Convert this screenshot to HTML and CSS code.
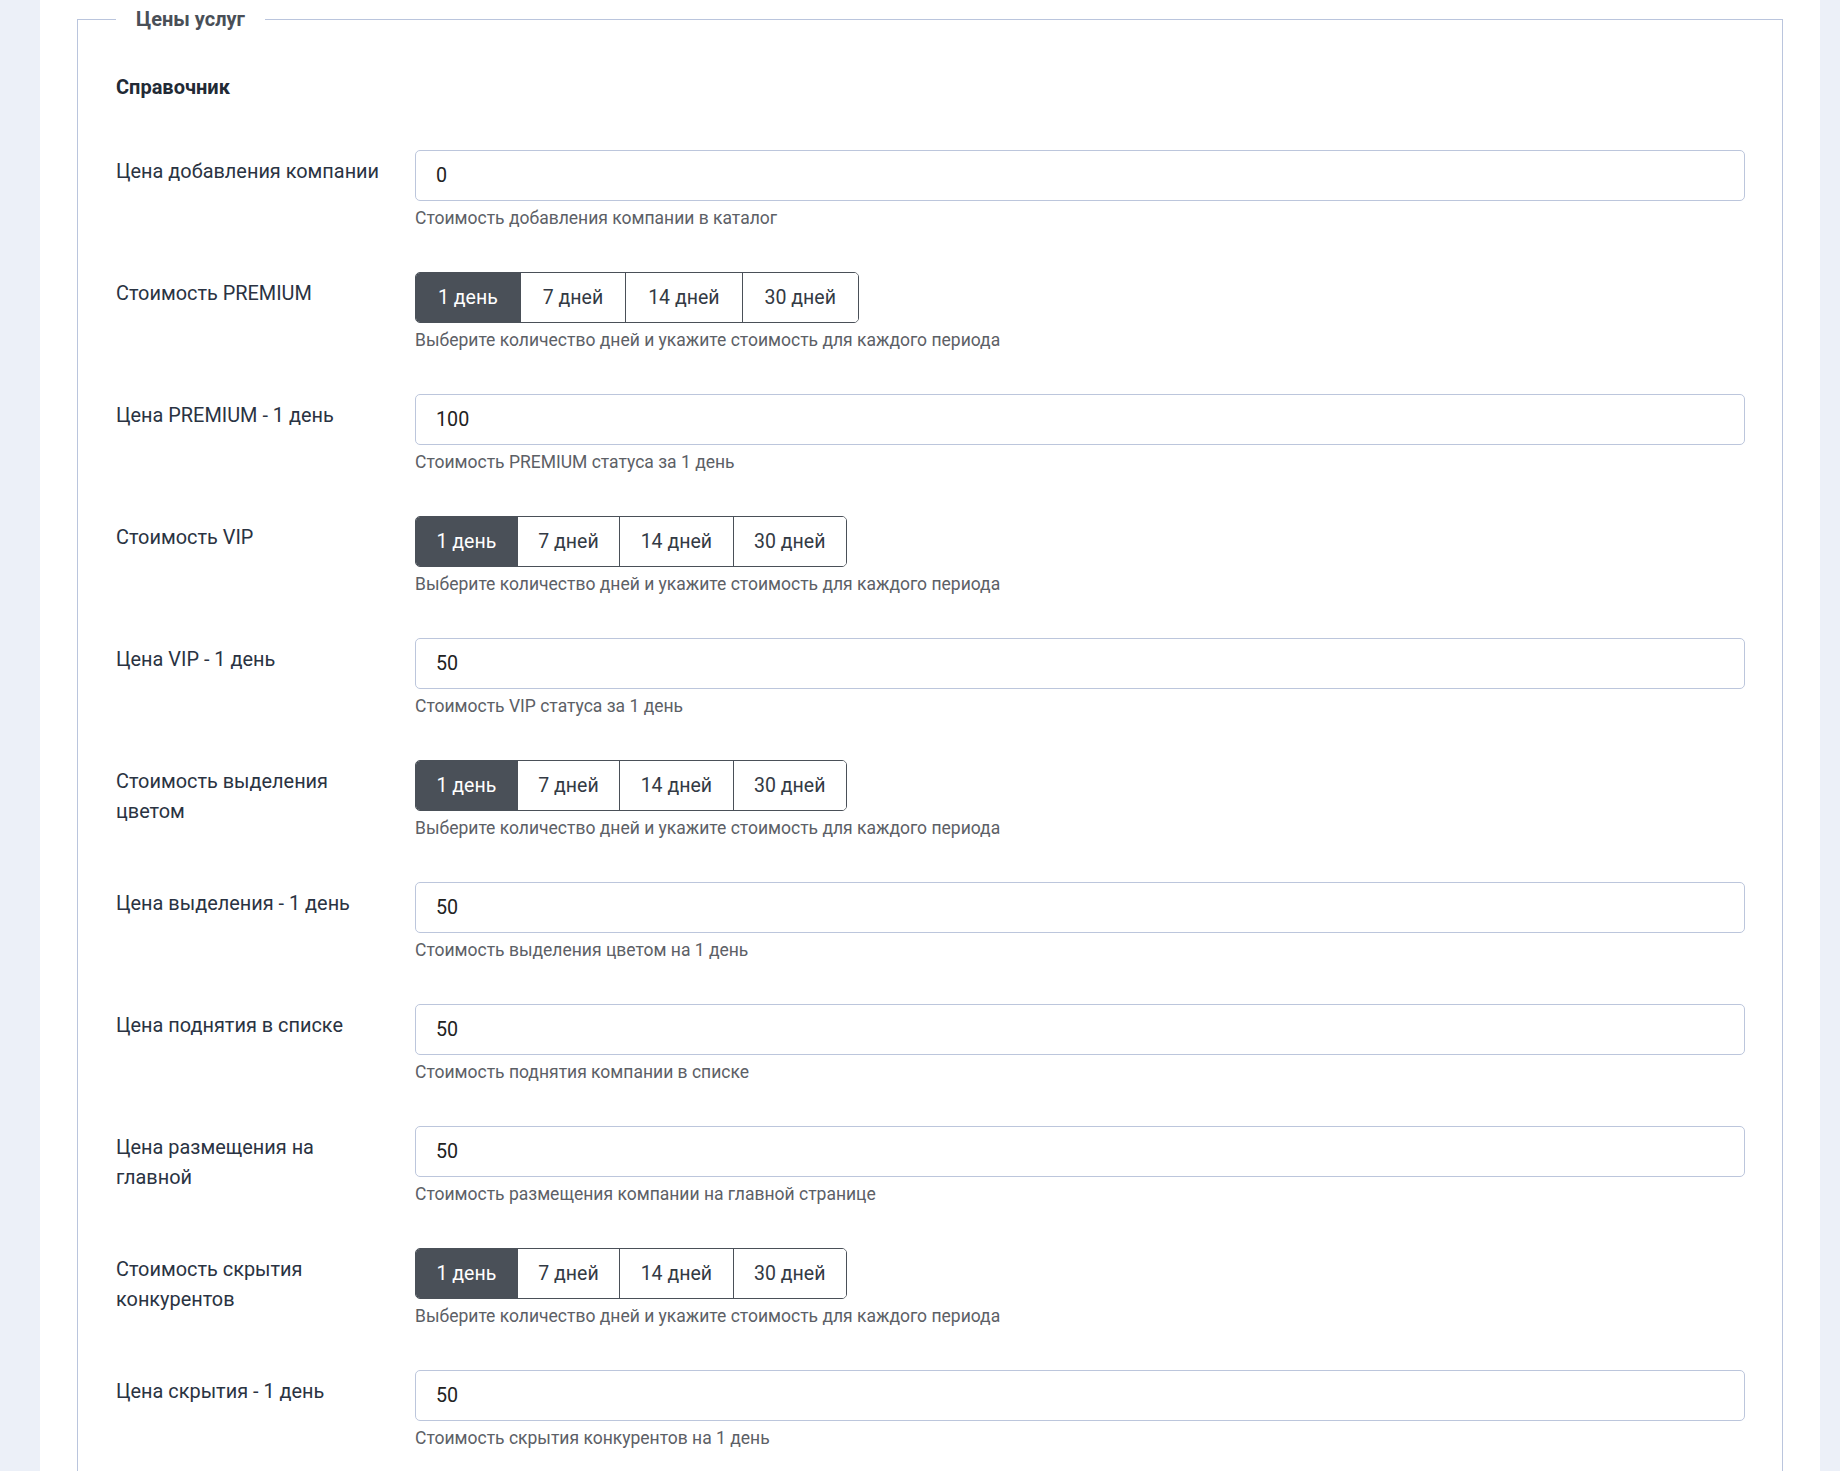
FILE: index.html
```html
<!DOCTYPE html>
<html lang="ru">
<head>
<meta charset="utf-8">
<title>Цены услуг</title>
<link rel="stylesheet" href="styles.css">
</head>
<body>
<div class="page">
  <fieldset class="box">
    <legend class="box-legend">Цены услуг</legend>
    <div class="section-title">Справочник</div>

    <div class="row">
      <label class="row-label">Цена добавления компании</label>
      <div class="row-control">
        <input class="field" type="text" value="0">
        <div class="hint">Стоимость добавления компании в каталог</div>
      </div>
    </div>

    <div class="row">
      <label class="row-label">Стоимость PREMIUM</label>
      <div class="row-control">
        <div class="seg seg-wide">
          <button class="seg-btn active">1 день</button><button class="seg-btn">7 дней</button><button class="seg-btn">14 дней</button><button class="seg-btn">30 дней</button>
        </div>
        <div class="hint">Выберите количество дней и укажите стоимость для каждого периода</div>
      </div>
    </div>

    <div class="row">
      <label class="row-label">Цена PREMIUM - 1 день</label>
      <div class="row-control">
        <input class="field" type="text" value="100">
        <div class="hint">Стоимость PREMIUM статуса за 1 день</div>
      </div>
    </div>

    <div class="row">
      <label class="row-label">Стоимость VIP</label>
      <div class="row-control">
        <div class="seg">
          <button class="seg-btn active">1 день</button><button class="seg-btn">7 дней</button><button class="seg-btn">14 дней</button><button class="seg-btn">30 дней</button>
        </div>
        <div class="hint">Выберите количество дней и укажите стоимость для каждого периода</div>
      </div>
    </div>

    <div class="row">
      <label class="row-label">Цена VIP - 1 день</label>
      <div class="row-control">
        <input class="field" type="text" value="50">
        <div class="hint">Стоимость VIP статуса за 1 день</div>
      </div>
    </div>

    <div class="row">
      <label class="row-label">Стоимость выделения цветом</label>
      <div class="row-control">
        <div class="seg">
          <button class="seg-btn active">1 день</button><button class="seg-btn">7 дней</button><button class="seg-btn">14 дней</button><button class="seg-btn">30 дней</button>
        </div>
        <div class="hint">Выберите количество дней и укажите стоимость для каждого периода</div>
      </div>
    </div>

    <div class="row">
      <label class="row-label">Цена выделения - 1 день</label>
      <div class="row-control">
        <input class="field" type="text" value="50">
        <div class="hint">Стоимость выделения цветом на 1 день</div>
      </div>
    </div>

    <div class="row">
      <label class="row-label">Цена поднятия в списке</label>
      <div class="row-control">
        <input class="field" type="text" value="50">
        <div class="hint">Стоимость поднятия компании в списке</div>
      </div>
    </div>

    <div class="row">
      <label class="row-label">Цена размещения на главной</label>
      <div class="row-control">
        <input class="field" type="text" value="50">
        <div class="hint">Стоимость размещения компании на главной странице</div>
      </div>
    </div>

    <div class="row">
      <label class="row-label">Стоимость скрытия конкурентов</label>
      <div class="row-control">
        <div class="seg">
          <button class="seg-btn active">1 день</button><button class="seg-btn">7 дней</button><button class="seg-btn">14 дней</button><button class="seg-btn">30 дней</button>
        </div>
        <div class="hint">Выберите количество дней и укажите стоимость для каждого периода</div>
      </div>
    </div>

    <div class="row">
      <label class="row-label">Цена скрытия - 1 день</label>
      <div class="row-control">
        <input class="field" type="text" value="50">
        <div class="hint">Стоимость скрытия конкурентов на 1 день</div>
      </div>
    </div>
  </fieldset>
</div>
</body>
</html>
```

FILE: styles.css
```css
* { box-sizing: border-box; }

html, body {
  margin: 0;
  padding: 0;
}

body {
  background: #ecf0f8;
  font-family: Roboto, "Noto Sans", "Liberation Sans", sans-serif;
  color: #2a3342;
}

.page {
  margin: 0 20px 0 40px;
  background: #fff;
  padding: 7px 37px 0;
  min-height: 1471px;
}

.box {
  margin: 0;
  border: 1px solid #bac5dd;
  padding: 0 37px 40px 38px;
  min-width: 0;
}

.box-legend {
  padding: 0 20px;
  font-size: 20px;
  line-height: 24px;
  font-weight: 700;
  color: #4a4f57;
}

.section-title {
  margin-top: 41px;
  margin-bottom: 48px;
  font-size: 20px;
  line-height: 30px;
  font-weight: 700;
  color: #222a35;
}

.row {
  display: grid;
  grid-template-columns: 299px 1fr;
  margin-bottom: 42px;
}

.row-label {
  padding: 7px 30px 0 0;
  font-size: 19.9px;
  line-height: 30px;
  color: #2a3342;
}

.row-control {
  min-width: 0;
}

.field {
  display: block;
  width: 100%;
  height: 51px;
  margin: 0;
  padding: 0 20px;
  border: 1px solid #bcc6dc;
  border-radius: 5px;
  background: #fff;
  font-family: inherit;
  font-size: 19.7px;
  color: #222;
  outline: none;
}

.hint {
  margin-top: 5px;
  font-size: 17.5px;
  line-height: 24px;
  color: #5c6066;
}

.seg {
  display: inline-flex;
  height: 51px;
  border: 1px solid #4a5058;
  border-radius: 5px;
  overflow: hidden;
  vertical-align: top;
}

.seg-btn {
  margin: 0;
  padding: 0 20.5px;
  border: 0;
  border-left: 1px solid #4a5058;
  background: #fff;
  font-family: inherit;
  font-size: 19.5px;
  color: #333a44;
  cursor: pointer;
}

.seg-btn:first-child {
  border-left: 0;
}

.seg-wide .seg-btn {
  padding: 0 22px;
}

.seg-btn.active {
  background: #4a5058;
  color: #fff;
}
```
